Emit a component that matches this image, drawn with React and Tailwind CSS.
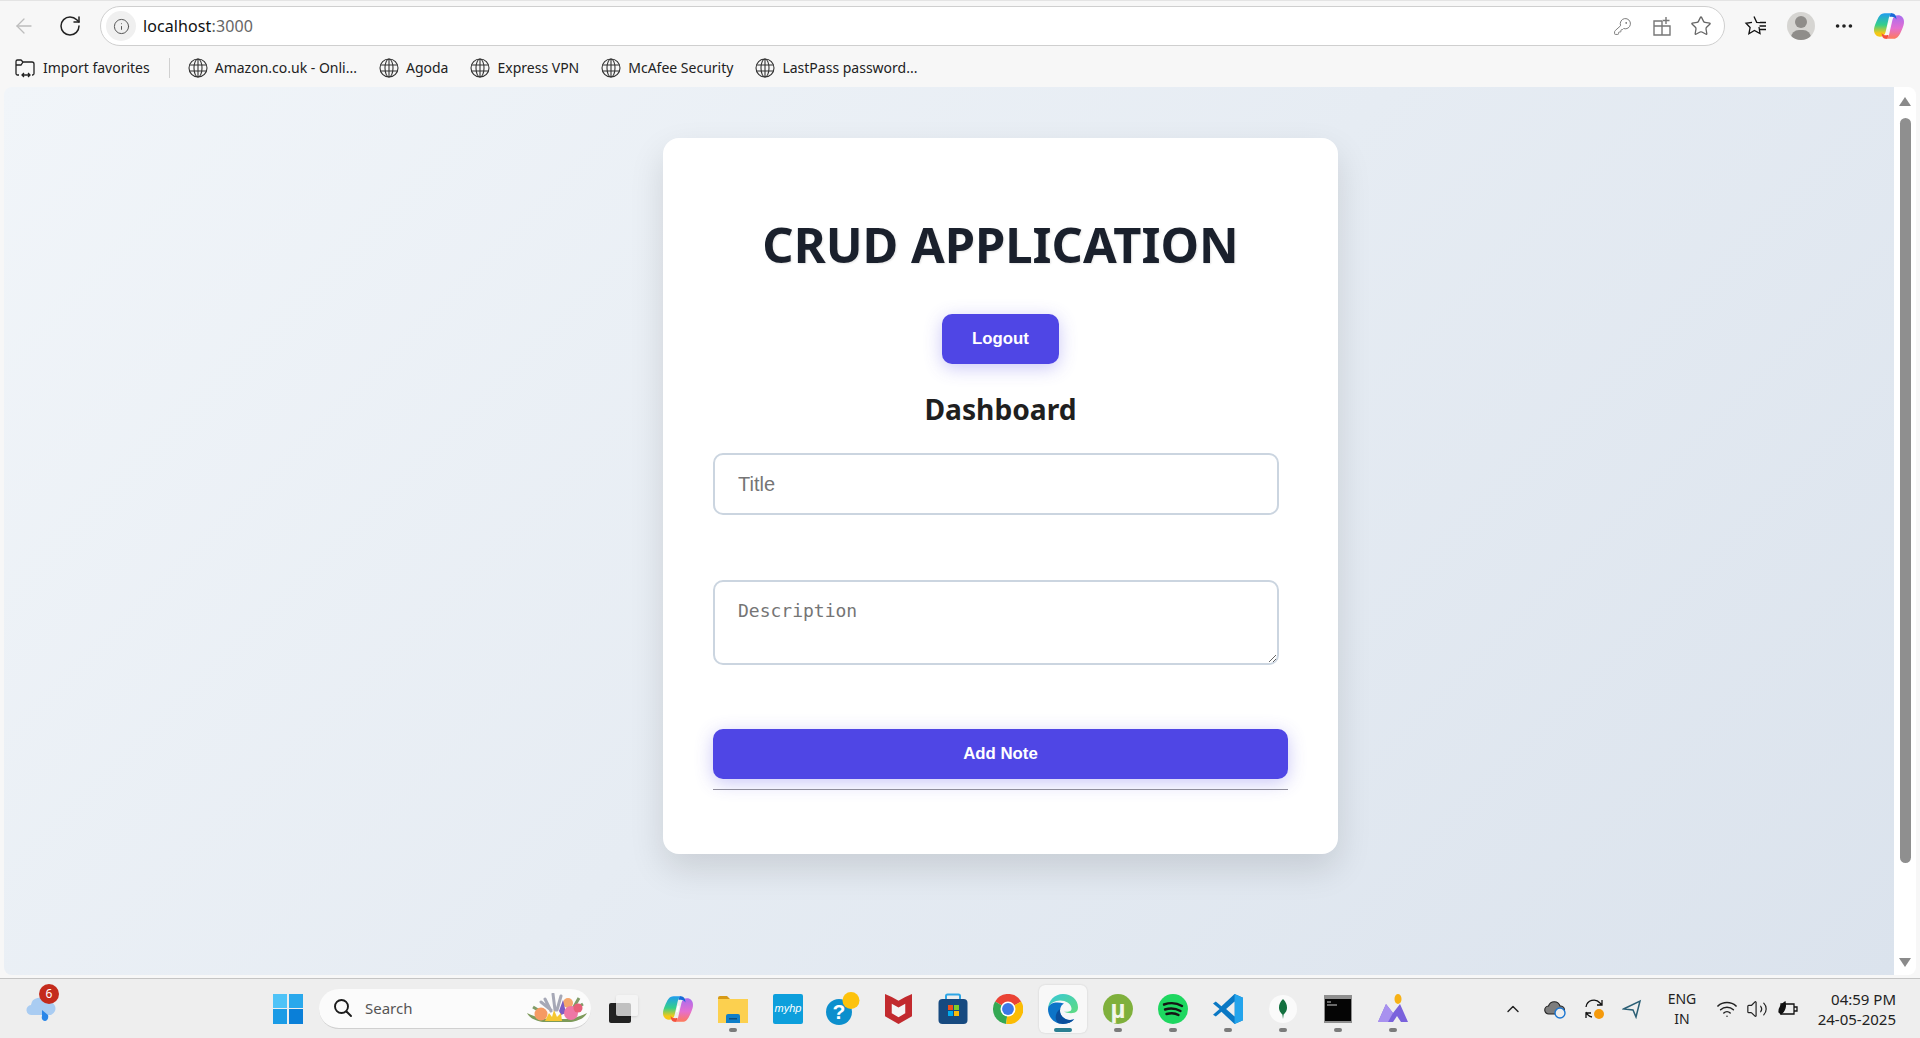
import { ArrowLeft, RotateCw, Info, KeyRound, Star, MoreHorizontal, ChevronUp, Wifi, Volume2 } from 'lucide-react'

const bookmarks = [
  ['Amazon.co.uk - Onli...', 'ml-[18px]'],
  ['Agoda', 'ml-[22px]'],
  ['Express VPN', 'ml-[22px]'],
  ['McAfee Security', 'ml-[22px]'],
  ['LastPass password...', 'ml-[22px]'],
]

const Globe = () => (
  <svg width="20" height="20" viewBox="0 0 20 20" fill="none" stroke="#333" strokeWidth="1.1">
    <circle cx="10" cy="10" r="9" />
    <ellipse cx="10" cy="10" rx="4" ry="9" />
    <path d="M10 1v18M1.500 7h17M1.500 13h17" />
  </svg>
)

const ImportIcon = () => (
  <svg width="22" height="20" viewBox="0 0 22 20" fill="none" stroke="#222" strokeWidth="1.3">
    <path d="M5 17H3.500A1.500 1.500 0 0 1 2 15.500V3.500A1.500 1.500 0 0 1 3.500 2H7l2 2h9a2 2 0 0 1 2 2v9.500a1.500 1.500 0 0 1-1.500 1.500H18" />
    <path d="M2 7h5l2-3" />
    <path d="M8 17h8M10 15l-2 2 2 2M14 15l2 2-2 2" />
  </svg>
)

const CopilotIcon = ({ id, size = 28 }) => (
  <svg width={size} height={size} viewBox="0 0 28 28">
    <defs>
      <linearGradient id={`${id}a`} x1="0" y1="0" x2="0" y2="1">
        <stop offset="0" stopColor="#1f9cf0" />
        <stop offset="0.5" stopColor="#35cf8a" />
        <stop offset="0.85" stopColor="#f7c815" />
      </linearGradient>
      <linearGradient id={`${id}b`} x1="0" y1="0" x2="0" y2="1">
        <stop offset="0" stopColor="#a86df0" />
        <stop offset="0.55" stopColor="#e46fd0" />
        <stop offset="1" stopColor="#ff7a59" />
      </linearGradient>
    </defs>
    <path d="M10 2h9c-3 0-4.500 1.500-5.200 4.500l-3 13c-.7 3-2.300 4.500-5.300 4.500C2.500 24 0 21.500 0 18c0-2.500.7-4.500 2-7.500C4 6 5.500 2 10 2Z" fill={`url(#${id}a)`} />
    <path d="M18 26H9c3 0 4.500-1.500 5.200-4.500l3-13C17.900 5.500 19.500 4 22.500 4 25.500 4 28 6.500 28 10c0 2.500-.7 4.500-2 7.500-2 4.500-3.500 8.500-8 8.500Z" fill={`url(#${id}b)`} />
    <path d="M16 2c2.500 0 3.800 1 4.500 3l.5 3c-1-2-2.500-3-6.500-2.500C15 3.500 15.500 2.500 16 2Z" fill="#1769d8" />
    <path d="M12 26c-2.500 0-3.800-1-4.500-3L7 20c1 2 2.500 3 6.500 2.500-.5 2-1 3-1.500 3.500Z" fill="#f4503c" />
    <path d="M15.500 11h-2l-1.500 6h2Z" fill="#fff" />
  </svg>
)

const Flowers = () => (
  <svg width="60" height="30" viewBox="0 0 60 30">
    <path d="M0 20c3 6 10 8 16 9h28c6-1 13-3 16-9-6 3-14 6-22 6H22C14 26 6 23 0 20Z" fill="#7d9a5a" />
    <path d="M6 14l10 6M52 5l-8 14M56 11l-10 6" stroke="#7f9c68" strokeWidth="3" />
    <path d="M18 6l6 12M26 1l2 16M34 3l-4 14M14 9l10 8" stroke="#a6a8b6" strokeWidth="3" strokeLinecap="round" />
    <circle cx="14" cy="21" r="6.500" fill="#f59a63" />
    <circle cx="41" cy="10" r="5" fill="#f5a66c" />
    <path d="M36 7l3 13-5 2-2-4Z" fill="#7c5cc4" />
    <circle cx="44" cy="20" r="7" fill="#ee77a6" />
    <circle cx="51" cy="15" r="4.500" fill="#e85f78" />
    <path d="M18 28l4-8 3 4 2-7 3 7 4-4 1 8Z" fill="#f5c733" />
  </svg>
)

const TaskIcon = ({ running, active, children }) => (
  <div className={`relative flex h-[48px] w-[48px] items-center justify-center rounded-md ${active ? 'bg-[#f8f8f8] shadow-[0_0_2px_rgba(0,0,0,0.15)]' : ''}`}>
    {children}
    {running && <span className={`absolute bottom-[1px] left-1/2 h-[4px] -translate-x-1/2 rounded-full ${active ? 'w-[18px] bg-[#2a7f92]' : 'w-[8px] bg-[#7b7b7b]'}`} />}
  </div>
)

const taskIcons = [
  {
    key: 'copilot',
    el: <CopilotIcon id="tb" size={30} />,
  },
  {
    key: 'folder',
    running: true,
    el: (
      <svg width="30" height="30" viewBox="0 0 30 30">
        <path d="M0 4a2 2 0 0 1 2-2h7l3 3h-12Z" fill="#d79a16" />
        <rect x="0" y="5" width="30" height="24" fill="#fcd04f" />
        <path d="M10 20h10a2 2 0 0 1 2 2v7H8v-7a2 2 0 0 1 2-2Z" fill="#0f7fc9" />
        <rect x="11" y="24" width="8" height="1.500" fill="#0b4f80" />
      </svg>
    ),
  },
  {
    key: 'myhp',
    el: (
      <div className="flex h-[30px] w-[30px] items-center justify-center rounded-[2px] bg-[#0d9fdc] font-['Liberation_Sans',sans-serif] text-[11px] italic text-white">myhp</div>
    ),
  },
  {
    key: 'help',
    el: (
      <svg width="34" height="34" viewBox="0 0 34 34">
        <circle cx="13" cy="20" r="13" fill="#0c8fcd" />
        <text x="13" y="27" textAnchor="middle" fontFamily="Liberation Sans, sans-serif" fontWeight="700" fontSize="21" fill="#fff">?</text>
        <circle cx="25" cy="8.500" r="8.500" fill="#fdc20c" />
      </svg>
    ),
  },
  {
    key: 'mcafee',
    el: (
      <svg width="27" height="31" viewBox="0 0 28 32">
        <path d="M0 1l7 3 7 4 7-4 7-3v23l-14 8-14-8Z" fill="#c22a2e" />
        <path d="M7 11l7 4 7-4v10l-7 4-7-4Z" fill="#f4f4f4" />
      </svg>
    ),
  },
  {
    key: 'store',
    el: (
      <svg width="30" height="32" viewBox="0 0 30 32">
        <path d="M8 7V3a1.500 1.500 0 0 1 1.500-1.500h11A1.500 1.500 0 0 1 22 3v4" fill="none" stroke="#2ea6e6" strokeWidth="2" />
        <rect x="0.500" y="6" width="29" height="25" rx="4" fill="#174a80" />
        <rect x="10" y="12" width="5" height="5" fill="#f1511b" />
        <rect x="16" y="12" width="5" height="5" fill="#80cc28" />
        <rect x="10" y="18" width="5" height="5" fill="#00adef" />
        <rect x="16" y="18" width="5" height="5" fill="#fbbc09" />
      </svg>
    ),
  },
  {
    key: 'chrome',
    el: (
      <svg width="30" height="30" viewBox="0 0 32 32">
        <path d="M16 16 2.200 8A16 16 0 0 1 30 8Z" fill="#ea4335" />
        <path d="M16 16 2.200 8A16 16 0 0 0 14 32Z" fill="#34a853" />
        <path d="M16 16 30 8a16 16 0 0 1-16 24Z" fill="#fbbc04" />
        <circle cx="16" cy="16" r="8" fill="#fff" />
        <circle cx="16" cy="16" r="6.300" fill="#3b78e7" />
      </svg>
    ),
  },
  {
    key: 'edge',
    active: true,
    running: true,
    el: (
      <svg width="30" height="30" viewBox="0 0 32 32">
        <defs>
          <linearGradient id="edgeg" x1="0" y1="0" x2="1" y2="1">
            <stop offset="0" stopColor="#37c8d8" />
            <stop offset="1" stopColor="#5fdc7e" />
          </linearGradient>
        </defs>
        <path d="M16 0C7 0 .5 7 0 16c2-6 7-9 13-9 6 0 11 3 12 8 .5 3-2 4-5 4h-3c3 1 7 2 11 1 3-1 4-3 4-6C32 6 25 0 16 0Z" fill="url(#edgeg)" />
        <path d="M0 16c0 9 7 16 16 16 5 0 9-2 12-5-3 1-7 1-10-1-4-2-6-6-5-10 .5-3 2-5 4-6C9 8 1 9 0 16Z" fill="#0c74c8" />
        <path d="M13 16c-1 5 2 9 6 11 3 1 6 1 9 0-3 3-7 5-12 5-2 0-4-.5-5-1 -4-3-4-11 2-15Z" fill="#0a4f9c" />
      </svg>
    ),
  },
  {
    key: 'utorrent',
    running: true,
    el: (
      <div className="flex h-[30px] w-[30px] items-center justify-center rounded-full bg-[#7fb03c] font-['Liberation_Sans',sans-serif] text-[26px] font-bold leading-[26px] text-[#f2f6ea]">
        µ
      </div>
    ),
  },
  {
    key: 'spotify',
    running: true,
    el: (
      <svg width="30" height="30" viewBox="0 0 30 30">
        <circle cx="15" cy="15" r="15" fill="#1ed760" />
        <path d="M6 10.500c6-2 13-1.500 18 1.500M7 15.500c5-1.500 11-1 15.500 1.500M8.500 20c4-1 9-.8 12 1" fill="none" stroke="#151515" strokeWidth="2.400" strokeLinecap="round" />
      </svg>
    ),
  },
  {
    key: 'vscode',
    running: true,
    el: (
      <svg width="30" height="30" viewBox="0 0 32 32">
        <path d="M23 0 32 4v24l-9 4L9 19l-6 5-3-2 7-6-7-6 3-2 6 5Z" fill="#0a78c4" />
        <path d="M23 0 32 4v24l-9 4Z" fill="#23a4ec" />
        <path d="M23 8v16l-9-8Z" fill="#eeeeee" />
      </svg>
    ),
  },
  {
    key: 'mongo',
    running: true,
    el: (
      <svg width="28" height="28" viewBox="0 0 28 28">
        <circle cx="14" cy="14" r="14" fill="#fafafa" />
        <path d="M14 4c3.500 3.500 4.500 7 3.800 10.500-.5 2.500-2.300 4-3.200 5l-.6 4.500-.6-4.500c-.9-1-2.700-2.500-3.200-5C9.500 11 10.500 7.500 14 4Z" fill="#13703f" />
      </svg>
    ),
  },
  {
    key: 'terminal',
    running: true,
    el: (
      <svg width="28" height="28" viewBox="0 0 28 28">
        <rect width="28" height="28" fill="#8f8f8f" />
        <rect x="1" y="4" width="26" height="22" fill="#050505" />
        <path d="M3 7h4M3 10h10" stroke="#cfcfcf" strokeWidth="1" />
      </svg>
    ),
  },
  {
    key: 'app',
    running: true,
    el: (
      <svg width="30" height="30" viewBox="0 0 30 30">
        <path d="M0 28 8 10l7 9 7-9 8 18h-7l-4-6-4 6h-8l-3-2Z" fill="#7a62dc" />
        <path d="M8 10l7 9-5 9H0Z" fill="#a891ef" />
        <ellipse cx="20" cy="5" rx="3.500" ry="5" fill="#f7b115" />
      </svg>
    ),
  },
]

const CardButton = ({ children, className }) => (
  <button className={`h-[50px] rounded-[10px] bg-[#4f46e5] font-['Liberation_Sans',sans-serif] text-[16.800px] font-bold text-white shadow-[0_4px_18px_rgba(79,70,229,0.3)] ${className}`}>
    {children}
  </button>
)

export default function App() {
  return (
    <div className="flex h-[1038px] flex-col overflow-hidden bg-[#f7f7f7] font-['Noto_Sans',sans-serif]">
      {/* toolbar */}
      <div className="flex h-[48px] flex-none items-center border-t-[1px] border-[#e4e4e4] pr-[10px] pt-[3px]">
        <ArrowLeft className="ml-[12px] h-[24px] w-[24px] text-[#bdbdbd]" strokeWidth={1.3} />
        <RotateCw className="ml-[22px] h-[24px] w-[24px] text-[#222]" strokeWidth={1.5} />
        <div className="ml-[18px] flex h-[40px] w-[1625px] items-center rounded-full border border-[#cfcfcf] bg-white pr-[12px]">
          <div className="ml-[5px] flex h-[30px] w-[30px] items-center justify-center rounded-full bg-[#f0f0f0]">
            <Info className="h-[17px] w-[17px] text-[#555]" strokeWidth={1.4} />
          </div>
          <span className="ml-[7px] text-[16px] tracking-[0.1px] text-[#111]">
            localhost<span className="text-[#666]">:3000</span>
          </span>
          <div className="ml-auto flex items-center">
            <KeyRound className="h-[19px] w-[19px] text-[#777]" strokeWidth={1.2} />
            <svg className="ml-[20px]" width="20" height="20" viewBox="0 0 20 20" fill="none" stroke="#777" strokeWidth="1.400">
              <path d="M10 5H2v14h16v-9H2M10 5v14M14 1v7M10.500 4.500h7" />
            </svg>
            <Star className="ml-[18px] h-[22px] w-[22px] text-[#666]" strokeWidth={1.4} />
          </div>
        </div>
        <div className="ml-[19px] flex items-center">
          <svg width="24" height="24" viewBox="0 0 24 24" fill="none" stroke="#111" strokeWidth="1.300">
            <path d="M10 2.500l2.700 5.800 3.300.4M15 13l1 6.500-5.600-3-5.500 3.300 1.200-6.300L2 9.300l6-1" />
            <path d="M16 8.500h6M15.500 12h6.500M16 15.500h6" />
          </svg>
          <div className="relative ml-[19px] h-[28px] w-[28px] overflow-hidden rounded-full bg-[#d6d5d2]">
            <span className="absolute left-[8px] top-[4px] h-[12px] w-[12px] rounded-full bg-[#8f8d8a]" />
            <span className="absolute left-[4px] top-[18px] h-[16px] w-[20px] rounded-full bg-[#8f8d8a]" />
          </div>
          <MoreHorizontal className="ml-[18px] h-[22px] w-[22px] text-[#222]" />
          <div className="ml-[19px]"><CopilotIcon id="tool" size={30} /></div>
        </div>
      </div>

      {/* favourites bar */}
      <div className="flex h-[39px] flex-none items-center pl-[14px] text-[14px] text-[#222]">
        <ImportIcon />
        <span className="ml-[7px]">Import favorites</span>
        <span className="ml-[19px] h-[20px] w-px bg-[#d0d0d0]" />
        {bookmarks.map(([name, gap]) => (
          <div key={name} className={`flex items-center gap-[7px] ${gap}`}>
            <Globe />
            <span>{name}</span>
          </div>
        ))}
      </div>

      {/* page */}
      <div className="flex min-h-0 flex-1 pl-[4px] pr-[4px]">
        <div className="flex-1 overflow-hidden rounded-bl-[8px] rounded-tl-[8px] bg-[linear-gradient(135deg,#f1f5f9,#dbe3ed)]">
          <div className="ml-[659px] mt-[51px] flex h-[716px] w-[675px] flex-col rounded-[16px] bg-white px-[50px] shadow-[0_15px_35px_rgba(0,0,0,0.12)]">
            <h1 className="mt-[75px] text-center text-[48.800px] font-bold leading-[62px] text-[#1a202c] [text-shadow:1px_1px_2px_rgba(0,0,0,0.1)]">CRUD APPLICATION</h1>
            <div className="mt-[39px] flex justify-center">
              <CardButton className="w-[117px]">Logout</CardButton>
            </div>
            <h2 className="mt-[26px] text-center text-[28.200px] font-bold leading-[38px] text-[#1f1f1f]">Dashboard</h2>
            <input
              placeholder="Title"
              className="mt-[25px] h-[62px] w-[566px] flex-none rounded-[10px] border-2 border-[#cbd5e0] px-[23px] font-['Liberation_Sans',sans-serif] text-[20px] outline-none placeholder:text-[#757575]"
            />
            <textarea
              placeholder="Description"
              className="mt-[65px] block h-[85px] w-[566px] flex-none rounded-[10px] border-2 border-[#cbd5e0] px-[23px] pb-[15px] pt-[17px] font-['DejaVu_Sans_Mono',monospace] text-[18px] leading-[24px] outline-none placeholder:text-[#757575]"
            />
            <CardButton className="mt-[64px] w-[575px] flex-none">Add Note</CardButton>
            <hr className="mt-[10px] w-[575px] border-t border-[#8f8d9c]" />
          </div>
        </div>
        {/* scrollbar */}
        <div className="flex w-[22px] flex-none flex-col items-center rounded-r-[8px] bg-white pt-[10px]">
          <span className="h-0 w-0 border-x-[6px] border-b-[9px] border-x-transparent border-b-[#8a8a8a]" />
          <span className="mt-[12px] h-[745px] w-[11px] rounded-full bg-[#8f8f8f]" />
          <span className="mt-auto mb-[8px] h-0 w-0 border-x-[6px] border-t-[9px] border-x-transparent border-t-[#8a8a8a]" />
        </div>
      </div>

      {/* taskbar */}
      <div className="mt-[3px] flex h-[60px] flex-none items-center border-t border-[#c4c4c4] bg-[#eeeeee]">
        <div className="relative ml-[26px] w-[30px]">
          <svg width="30" height="26" viewBox="0 0 30 26">
            <path d="M6 19a5 5 0 0 1-1-10 8 8 0 0 1 15-3 6.500 6.500 0 0 1 5 13Z" fill="#a9ccf2" />
            <path d="M16 14l6 5c1 3-1 6-3 6s-4-2-3-5Z" fill="#2a86e8" />
          </svg>
          <span className="absolute -top-[12px] left-[13px] flex h-[20px] w-[20px] items-center justify-center rounded-full bg-[#c42b1c] text-[12px] text-white">6</span>
        </div>

        <div className="ml-[217px]">
          <div className="grid h-[30px] w-[30px] grid-cols-2 gap-[1.500px]">
            <span className="bg-[#4fc3f7]" />
            <span className="bg-[#29a8ec]" />
            <span className="bg-[#1a9be6]" />
            <span className="bg-[#0a7fd8]" />
          </div>
        </div>

        <div className="ml-[16px] flex h-[40px] w-[272px] items-center rounded-full border-b border-[#d0d0d0] bg-[#fbfbfb] pl-[14px] pr-[4px]">
          <svg width="20" height="20" viewBox="0 0 20 20" fill="none" stroke="#1c1c1c" strokeWidth="1.900">
            <circle cx="8.500" cy="8.500" r="6.500" />
            <path d="M13.500 13.500 18 18" strokeLinecap="round" />
          </svg>
          <span className="ml-[12px] text-[15px] text-[#555]">Search</span>
          <div className="ml-auto flex"><Flowers /></div>
        </div>

        <div className="relative ml-[18px] h-[28px] w-[29px]">
          <span className="absolute bottom-0 left-0 h-[20px] w-[22px] rounded-[2px] bg-[#222]" />
          <span className="absolute right-0 top-0 h-[21px] w-[22px] rounded-[2px] bg-[#f5f5f5]/75 shadow-sm" />
        </div>

        <div className="ml-[16px] flex gap-[7px]">
          {taskIcons.map((t) => (
            <TaskIcon key={t.key} running={t.running} active={t.active}>{t.el}</TaskIcon>
          ))}
        </div>

        <div className="ml-[86px] flex items-center text-[#222]">
          <ChevronUp className="h-[20px] w-[20px]" strokeWidth={1.7} />
          <svg className="ml-[21px]" width="22" height="20" viewBox="0 0 22 20">
            <path d="M5 15a4 4 0 0 1-.5-8 6 6 0 0 1 11.500 0 4 4 0 0 1 1 8Z" fill="#7d7d7d" stroke="#222" strokeWidth="1.100" />
            <circle cx="16" cy="14" r="5" fill="#eee" stroke="#1b76d2" strokeWidth="1.400" />
          </svg>
          <svg className="ml-[17px]" width="22" height="22" viewBox="0 0 22 22" fill="none" stroke="#111" strokeWidth="1.300">
            <path d="M3 9a8 8 0 0 1 14-4l2 2M19 2v5h-5M3 14a8 8 0 0 0 6 5M3 20v-5h5" />
            <circle cx="16" cy="16" r="5" fill="#f59a0c" stroke="none" />
          </svg>
          <svg className="ml-[17px]" width="20" height="20" viewBox="0 0 20 20" fill="none" stroke="#2b5f75" strokeWidth="1.500">
            <path d="M1.500 10 18 2l-4 16-3-7Z" />
          </svg>
          <div className="ml-[14px] w-[52px] text-center text-[14px] leading-[20px]">ENG<br />IN</div>
          <Wifi className="ml-[8px] h-[22px] w-[22px]" strokeWidth={1.6} />
          <Volume2 className="ml-[8px] h-[22px] w-[22px]" strokeWidth={1.3} />
          <svg className="ml-[9px]" width="22" height="20" viewBox="0 0 22 20" fill="none" stroke="#111" strokeWidth="1.300">
            <path d="M4 5h13v10H4ZM17 8h3v4h-3" />
            <path d="M2 13c0-5 3-8 6-10 1 5 0 9-4 12Z" fill="#111" />
          </svg>
          <div className="ml-[5px] w-[92px] text-right text-[15px] leading-[20px]">
            <div>04:59 PM</div>
            <div>24-05-2025</div>
          </div>
        </div>
      </div>
    </div>
  )
}
